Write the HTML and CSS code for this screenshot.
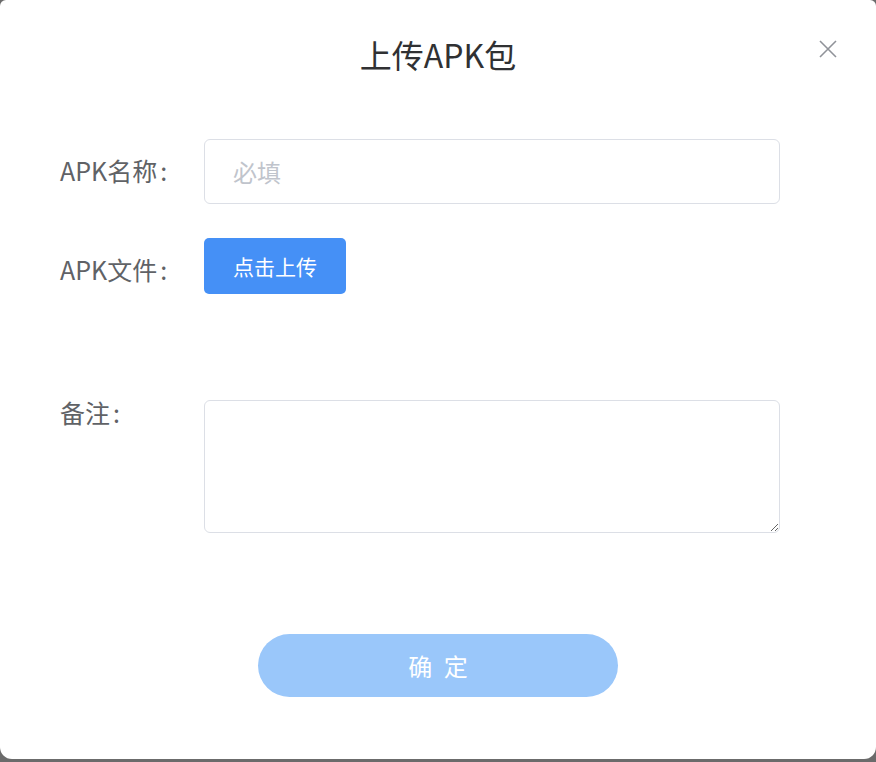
FILE: index.html
```html
<!DOCTYPE html>
<html lang="zh-CN">
<head>
<meta charset="utf-8">
<title>上传APK包</title>
<link rel="stylesheet" href="styles.css">
</head>
<body>
<div class="dialog">
  <div class="header">
    <h1 class="title">上传APK包</h1>
    <button class="close" aria-label="关闭">
      <svg width="18" height="18" viewBox="0 0 18 18"><path d="M1 1L17 17M17 1L1 17" stroke="#909399" stroke-width="1.6" fill="none"/></svg>
    </button>
  </div>
  <form class="form">
    <div class="row row-name">
      <label class="label">APK名称<span class="colon">:</span></label>
      <input class="input" type="text" placeholder="必填">
    </div>
    <div class="row row-file">
      <label class="label">APK文件<span class="colon">:</span></label>
      <button type="button" class="upload">点击上传</button>
    </div>
    <div class="row row-note">
      <label class="label">备注<span class="colon">:</span></label>
      <textarea class="textarea"></textarea>
    </div>
    <div class="footer">
      <button type="button" class="confirm">确 定</button>
    </div>
  </form>
</div>
</body>
</html>
```

FILE: styles.css
```css
* { box-sizing: border-box; }
html, body { margin: 0; padding: 0; }
body {
  width: 876px;
  height: 762px;
  background: #6b6b6b;
  font-family: "Noto Sans CJK SC", "Noto Sans", sans-serif;
  overflow: hidden;
}
.dialog {
  width: 876px;
  height: 759px;
  background: #fff;
  border-radius: 6px 6px 12px 12px;
  position: relative;
}
.header {
  padding-top: 30px;
  height: 120px;
}
.title {
  margin: 0;
  text-align: center;
  font-size: 32px;
  font-weight: 400;
  line-height: 48px;
  color: #303133;
}
.close {
  position: absolute;
  top: 40px;
  right: 39px;
  width: 18px;
  height: 18px;
  padding: 0;
  border: 0;
  background: none;
  display: flex;
}
.form {
  padding: 19px 96px 0 60px;
  display: flex;
  flex-direction: column;
}
.row {
  display: flex;
  align-items: center;
}
.label {
  width: 144px;
  flex-shrink: 0;
  font-size: 25px;
  color: #606266;
  line-height: 32px;
  margin-top: -3px;
}
.colon { margin-left: 3px; }
.input {
  width: 576px;
  height: 65px;
  border: 1px solid #dcdfe6;
  border-radius: 6px;
  padding: 0 28px;
  font-family: inherit;
  font-size: 24px;
  color: #606266;
  outline: none;
}
.input::placeholder { color: #c0c4cc; }
.row-file {
  margin-top: 34px;
  height: 56px;
}
.row-file .label { margin-top: 6px; }
.upload {
  width: 142px;
  height: 56px;
  border: 0;
  border-radius: 5px;
  background: #4590f6;
  color: #fff;
  font-family: inherit;
  font-size: 21px;
  padding: 0;
}
.row-note {
  margin-top: 106px;
  align-items: flex-start;
}
.row-note .label { margin-top: -4px; }
.textarea {
  width: 576px;
  height: 133px;
  border: 1px solid #dcdfe6;
  border-radius: 6px;
  resize: vertical;
  font-family: inherit;
  font-size: 22px;
  padding: 10px 16px;
  outline: none;
}
.footer {
  margin-top: 101px;
  padding-left: 198px;
}
.confirm {
  width: 360px;
  height: 63px;
  border: 0;
  border-radius: 32px;
  background: #9ac7fa;
  color: #fff;
  font-family: inherit;
  font-size: 24px;
  padding: 0 0 0 3px;
  letter-spacing: 3px;
}
```
